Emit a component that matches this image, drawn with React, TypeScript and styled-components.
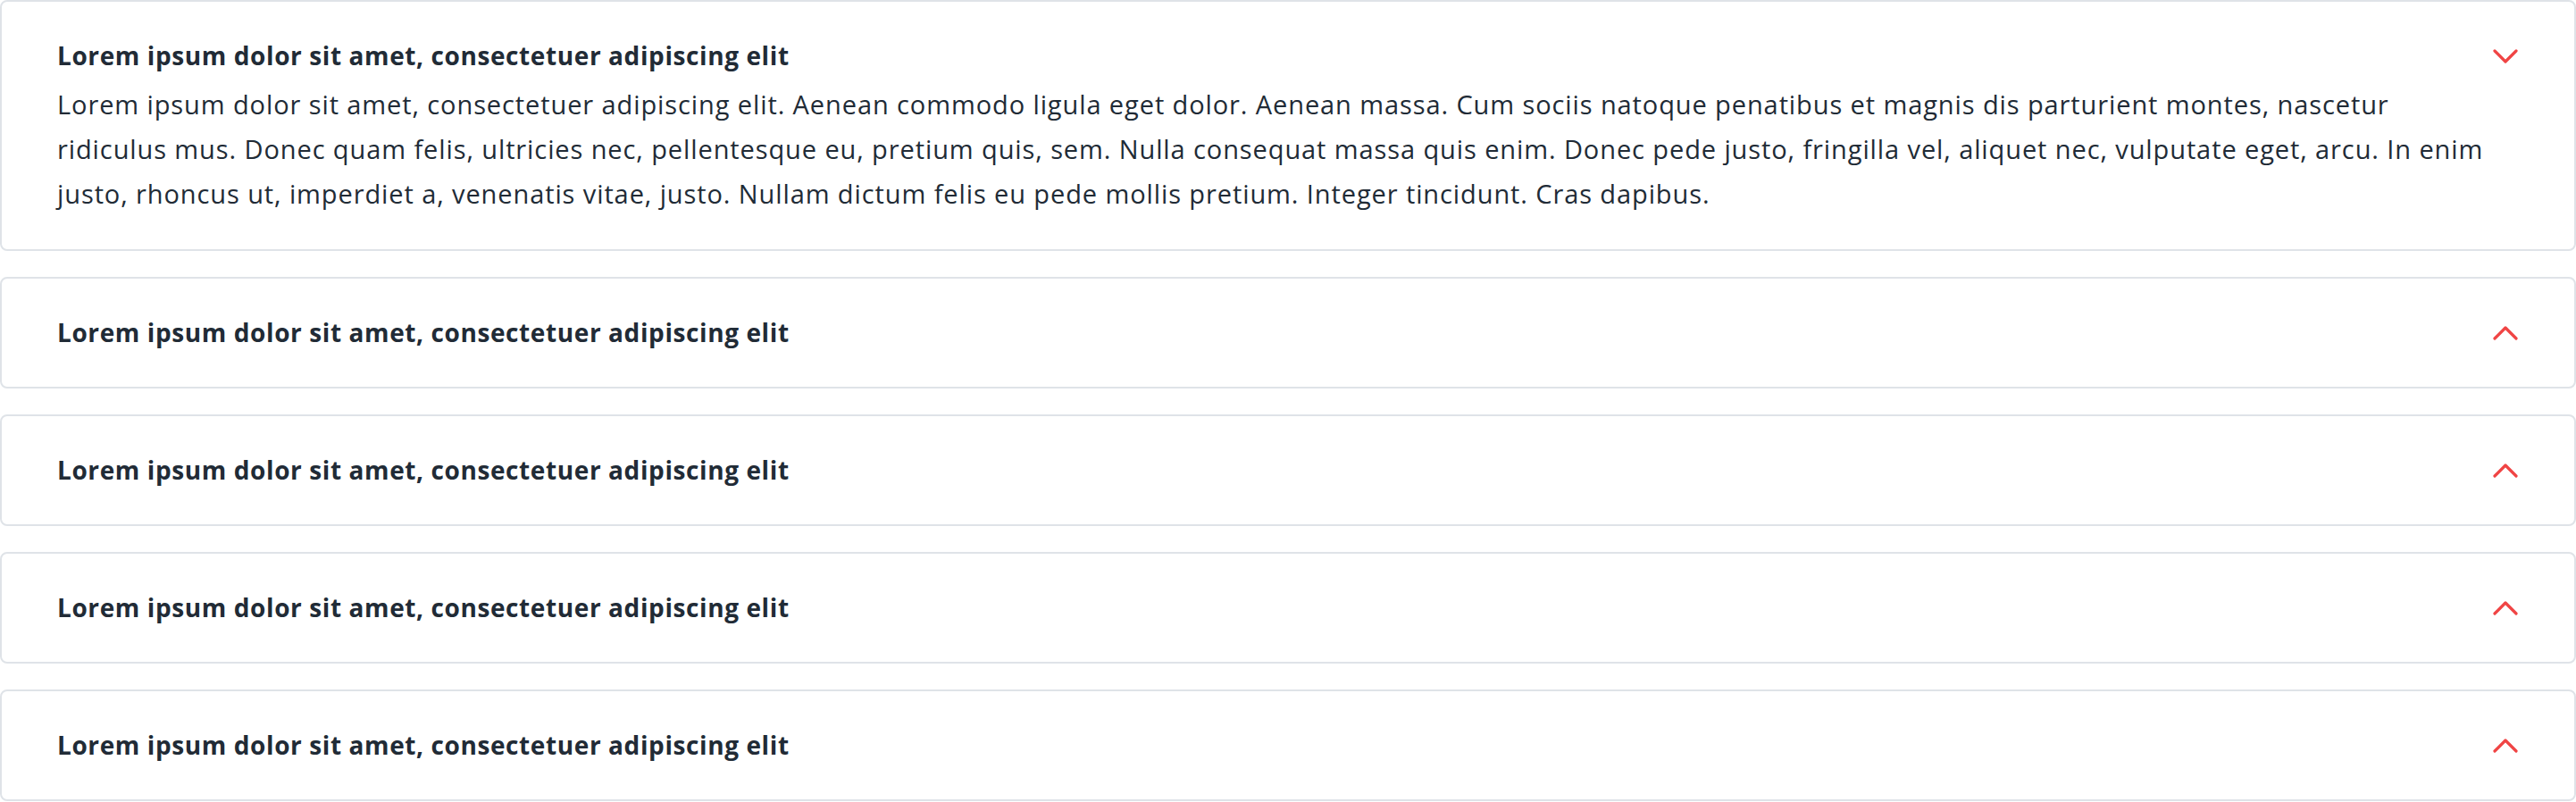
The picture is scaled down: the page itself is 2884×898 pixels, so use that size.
import { useState } from 'react'
import styled, { createGlobalStyle } from 'styled-components'

const GlobalStyle = createGlobalStyle`
	* {
		box-sizing: border-box;
	}

	body {
		margin: 0;
		background: #ffffff;
		font-family: 'Open Sans', 'Noto Sans', sans-serif;
		color: #212b36;
	}
`

const AccordionList = styled.div`
	display: flex;
	flex-direction: column;
	gap: 29px;
`

const AccordionItem = styled.div<{ $open: boolean }>`
	border: 2px solid #dfe3e8;
	border-radius: 8px;
	background: #ffffff;
	padding: 40px 63px ${({ $open }) => ($open ? '37px' : '40px')} 62px;
`

const AccordionHeader = styled.button`
	display: flex;
	align-items: center;
	justify-content: space-between;
	width: 100%;
	padding: 0;
	border: 0;
	background: none;
	cursor: pointer;
	text-align: left;
	font: inherit;
	color: inherit;
`

const AccordionTitle = styled.h3`
	margin: 0;
	font-size: 28px;
	line-height: 41px;
	font-weight: 700;
	letter-spacing: 0.6px;
	color: #212b36;
`

const AccordionBody = styled.p`
	margin: 9px 0 0;
	max-width: 2725px;
	font-size: 29px;
	line-height: 50px;
	font-weight: 400;
	letter-spacing: 0.9px;
	color: #212b36;
`

const Chevron = styled.svg<{ $open: boolean }>`
	flex: none;
	width: 28px;
	height: 16px;
	transform: rotate(${({ $open }) => ($open ? '0deg' : '180deg')});
`

const title = 'Lorem ipsum dolor sit amet, consectetuer adipiscing elit'

const body =
	'Lorem ipsum dolor sit amet, consectetuer adipiscing elit. Aenean commodo ligula eget dolor. Aenean massa. Cum sociis natoque penatibus et magnis dis parturient montes, nascetur ridiculus mus. Donec quam felis, ultricies nec, pellentesque eu, pretium quis, sem. Nulla consequat massa quis enim. Donec pede justo, fringilla vel, aliquet nec, vulputate eget, arcu. In enim justo, rhoncus ut, imperdiet a, venenatis vitae, justo. Nullam dictum felis eu pede mollis pretium. Integer tincidunt. Cras dapibus.'

const items = [0, 1, 2, 3, 4]

const App = () => {
	const [open, setOpen] = useState<number | null>(0)

	return (
		<>
			<GlobalStyle />
			<AccordionList>
				{items.map((i) => {
					const isOpen = open === i
					return (
						<AccordionItem key={i} $open={isOpen}>
							<AccordionHeader onClick={() => setOpen(isOpen ? null : i)}>
								<AccordionTitle>{title}</AccordionTitle>
								<Chevron $open={isOpen} viewBox='0 0 28 16' fill='none'>
									<polyline
										points='2,2 14,14 26,2'
										stroke='#f04444'
										strokeWidth='3.2'
										strokeLinecap='round'
										strokeLinejoin='round'
									/>
								</Chevron>
							</AccordionHeader>
							{isOpen && <AccordionBody>{body}</AccordionBody>}
						</AccordionItem>
					)
				})}
			</AccordionList>
		</>
	)
}

export default App
